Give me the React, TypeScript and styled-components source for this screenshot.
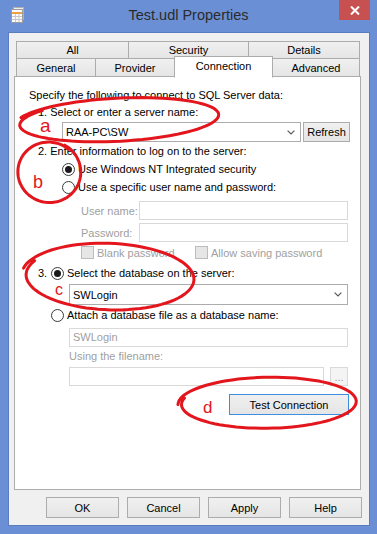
import React from "react";
import styled, { createGlobalStyle, css } from "styled-components";

const GlobalStyle = createGlobalStyle`
  html, body {
    margin: 0;
    padding: 0;
    background: #6b8fd4;
  }
  body {
    font-family: "Liberation Sans", Arial, sans-serif;
    font-size: 11px;
    color: #000;
  }
  * {
    box-sizing: border-box;
  }
`;

const Frame = styled.div`
  position: relative;
  width: 377px;
  height: 534px;
  background: #6b8fd4;
  display: flex;
  flex-direction: column;
  overflow: hidden;
`;

const TitleBar = styled.div`
  height: 32px;
  flex: none;
  display: grid;
  grid-template-columns: 1fr auto 1fr;
  align-items: start;
`;

const AppIcon = styled.svg`
  margin: 7px 0 0 10px;
`;

const Title = styled.div`
  font-size: 14.5px;
  line-height: 30px;
  color: #2b2b2b;
`;

const CloseButton = styled.div`
  justify-self: end;
  margin-right: 7px;
  width: 31px;
  height: 20px;
  background: #c75050;
  display: flex;
  align-items: center;
  justify-content: center;
`;

const Client = styled.div`
  flex: 1;
  margin: 0 7px 8px 8px;
  border: 1px solid #5a7cc0;
  background: #f0f0f0;
  padding: 8px 8px 7px 5px;
  display: flex;
  flex-direction: column;
`;

const TabStrip = styled.div`
  margin: 0 1px 0 2px;
  display: flex;
  flex-direction: column;
`;

const TabRow = styled.div<{ $h: number; $lower?: boolean }>`
  display: flex;
  align-items: flex-start;
  height: ${(p) => p.$h}px;
  margin-top: ${(p) => (p.$lower ? -1 : 0)}px;
`;

const Tab = styled.div<{ $w: number; $selected?: boolean }>`
  width: ${(p) => p.$w}px;
  height: 100%;
  margin-left: -1px;
  border: 1px solid #acacac;
  background: linear-gradient(#f0f0f0, #e5e5e5);
  display: flex;
  align-items: center;
  justify-content: center;
  &:first-child {
    margin-left: 0;
  }
  ${(p) =>
    p.$selected &&
    css`
      position: relative;
      z-index: 1;
      height: calc(100% + 3px);
      margin-top: -2px;
      background: #fff;
      border-bottom-color: #fff;
      padding-bottom: 2px;
    `}
`;

const Panel = styled.div`
  margin-top: -1px;
  height: 414px;
  border: 1px solid #adadad;
  background: #fff;
  padding: 11px 10px 0 14px;
  display: flex;
  flex-direction: column;
`;

const Line = styled.div<{ $indent?: number; $top?: number; $muted?: boolean }>`
  height: 15px;
  line-height: 15px;
  white-space: nowrap;
  margin-left: ${(p) => p.$indent ?? 0}px;
  margin-top: ${(p) => p.$top ?? 0}px;
  color: ${(p) => (p.$muted ? "#a0a0a0" : "#000")};
`;

const Row = styled.div<{ $indent?: number; $top?: number; $h?: number; $gap?: number }>`
  display: flex;
  align-items: center;
  height: ${(p) => p.$h ?? 16}px;
  margin-left: ${(p) => p.$indent ?? 0}px;
  margin-top: ${(p) => p.$top ?? 0}px;
  gap: ${(p) => p.$gap ?? 0}px;
  white-space: nowrap;
`;

const Radio = styled.span<{ $checked?: boolean }>`
  flex: none;
  width: 13px;
  height: 13px;
  margin-right: 3px;
  border-radius: 50%;
  border: 1px solid #3a3a3a;
  background: #fff;
  display: inline-flex;
  align-items: center;
  justify-content: center;
  &::after {
    content: "";
    width: 7px;
    height: 7px;
    border-radius: 50%;
    background: #1b1b1b;
    display: ${(p) => (p.$checked ? "block" : "none")};
  }
`;

const StepNumber = styled.span`
  width: 13px;
`;

const CheckItem = styled.div<{ $w?: number }>`
  display: flex;
  align-items: center;
  gap: 3px;
  width: ${(p) => (p.$w ? `${p.$w}px` : "auto")};
  color: #a0a0a0;
`;

const CheckBox = styled.span`
  flex: none;
  width: 13px;
  height: 13px;
  border: 1px solid #bcbcbc;
  background: #e6e6e6;
`;

const Combo = styled.div<{ $w: number; $h?: number; $indent?: number; $top?: number }>`
  width: ${(p) => p.$w}px;
  height: ${(p) => p.$h ?? 20}px;
  margin-left: ${(p) => p.$indent ?? 0}px;
  margin-top: ${(p) => p.$top ?? 0}px;
  flex: none;
  border: 1px solid #acacac;
  background: #fff;
  padding: 0 5px 0 3px;
  display: flex;
  align-items: center;
  justify-content: space-between;
`;

const FieldLabel = styled.span`
  width: 58px;
  color: #a0a0a0;
`;

const Field = styled.div<{ $w: number; $indent?: number; $top?: number }>`
  width: ${(p) => p.$w}px;
  height: 19px;
  margin-left: ${(p) => p.$indent ?? 0}px;
  margin-top: ${(p) => p.$top ?? 0}px;
  flex: none;
  border: 1px solid #d9d9d9;
  background: #fff;
  padding-left: 3px;
  line-height: 17px;
  color: #a0a0a0;
`;

const Button = styled.div<{ $w: number; $h?: number; $focused?: boolean; $disabled?: boolean }>`
  width: ${(p) => p.$w}px;
  height: ${(p) => p.$h ?? 21}px;
  flex: none;
  border: 1px solid ${(p) => (p.$focused ? "#3d8ee0" : p.$disabled ? "#d9d9d9" : "#acacac")};
  background: ${(p) => (p.$disabled ? "#f4f4f4" : "linear-gradient(#f0f0f0, #e5e5e5)")};
  color: ${(p) => (p.$disabled ? "#a0a0a0" : "#000")};
  display: flex;
  align-items: center;
  justify-content: center;
`;

const TestButton = styled(Button)`
  margin: 8px 0 0 200px;
`;

const ButtonBar = styled.div`
  margin: 7px -1px 0 0;
  display: flex;
  justify-content: flex-end;
  gap: 8px;
`;

const Annotations = styled.svg`
  position: absolute;
  left: 0;
  top: 0;
  pointer-events: none;
`;

const Chevron = () => (
  <svg width="8" height="5" viewBox="0 0 8 5">
    <path d="M0.6 0.6 L4 4 L7.4 0.6" fill="none" stroke="#5a5a5a" strokeWidth="1.2" />
  </svg>
);

// hand-drawn loop, a little more than a full turn
const loop = (cx: number, cy: number, rx: number, ry: number, rot: number, start: number, sweep: number, shrink: number) => {
  const n = 90;
  const r = (rot * Math.PI) / 180;
  let d = "";
  for (let i = 0; i <= n; i++) {
    const t = i / n;
    const a = ((start + sweep * t) * Math.PI) / 180;
    const k = 1 - shrink * t;
    const x = rx * k * Math.cos(a);
    const y = ry * k * Math.sin(a);
    const px = cx + x * Math.cos(r) - y * Math.sin(r);
    const py = cy + x * Math.sin(r) + y * Math.cos(r);
    d += `${i === 0 ? "M" : "L"}${px.toFixed(1)} ${py.toFixed(1)} `;
  }
  return d;
};

const App = () => {
  return (
    <Frame>
      <GlobalStyle />
      <TitleBar>
        <AppIcon width="15" height="16" viewBox="0 0 15 16">
          <rect x="3.5" y="0.5" width="10" height="12" fill="#eee" stroke="#b0b0b0" />
          <rect x="1.5" y="2.5" width="11" height="13" fill="#fafafa" stroke="#9c9c9c" />
          <rect x="2" y="5" width="10" height="2" fill="#f0a040" />
          <path d="M2 9.5h10M2 12.5h10M5.5 7v8M9 7v8" stroke="#c8c8c8" />
        </AppIcon>
        <Title>Test.udl Properties</Title>
        <CloseButton>
          <svg width="10" height="9" viewBox="0 0 10 9">
            <path d="M1 0.5 L9 8.5 M9 0.5 L1 8.5" stroke="#fff" strokeWidth="2" />
          </svg>
        </CloseButton>
      </TitleBar>
      <Client>
        <TabStrip>
          <TabRow $h={18}>
            <Tab $w={113}>All</Tab>
            <Tab $w={121}>Security</Tab>
            <Tab $w={112}>Details</Tab>
          </TabRow>
          <TabRow $h={19} $lower>
            <Tab $w={80}>General</Tab>
            <Tab $w={80}>Provider</Tab>
            <Tab $w={99} $selected>
              Connection
            </Tab>
            <Tab $w={88}>Advanced</Tab>
          </TabRow>
        </TabStrip>
        <Panel>
          <Line>Specify the following to connect to SQL Server data:</Line>
          <Line $indent={9} $top={2}>
            1. Select or enter a server name:
          </Line>
          <Row $indent={33} $top={2} $h={20} $gap={2}>
            <Combo $w={239}>
              <span>RAA-PC\SW</span>
              <Chevron />
            </Combo>
            <Button $w={47} $h={20}>
              Refresh
            </Button>
          </Row>
          <Line $indent={9} $top={2}>
            2. Enter information to log on to the server:
          </Line>
          <Row $indent={33} $top={2}>
            <Radio $checked />
            Use Windows NT Integrated security
          </Row>
          <Row $indent={33} $top={2}>
            <Radio />
            Use a specific user name and password:
          </Row>
          <Row $indent={52} $top={6} $h={19}>
            <FieldLabel>User name:</FieldLabel>
            <Field $w={209} />
          </Row>
          <Row $indent={52} $top={3} $h={19}>
            <FieldLabel>Password:</FieldLabel>
            <Field $w={209} />
          </Row>
          <Row $indent={52} $top={3} $h={15}>
            <CheckItem $w={114}>
              <CheckBox />
              Blank password
            </CheckItem>
            <CheckItem>
              <CheckBox />
              Allow saving password
            </CheckItem>
          </Row>
          <Row $indent={9} $top={5}>
            <StepNumber>3.</StepNumber>
            <Radio $checked />
            Select the database on the server:
          </Row>
          <Combo $w={279} $h={21} $indent={40} $top={3}>
            <span>SWLogin</span>
            <Chevron />
          </Combo>
          <Row $indent={22} $top={2}>
            <Radio />
            Attach a database file as a database name:
          </Row>
          <Field $w={279} $indent={40} $top={5}>
            SWLogin
          </Field>
          <Line $indent={40} $top={2} $muted>
            Using the filename:
          </Line>
          <Row $indent={40} $top={3} $h={19} $gap={6}>
            <Field $w={255} />
            <Button $w={18} $h={19} $disabled>
              ...
            </Button>
          </Row>
          <TestButton $w={120} $focused>
            Test Connection
          </TestButton>
        </Panel>
        <ButtonBar>
          <Button $w={73}>OK</Button>
          <Button $w={73}>Cancel</Button>
          <Button $w={73}>Apply</Button>
          <Button $w={73}>Help</Button>
        </ButtonBar>
      </Client>
      <Annotations width="377" height="534" viewBox="0 0 377 534">
        <g fill="none" stroke="#e3161d" strokeWidth="3" strokeLinecap="round">
          <path d={loop(118, 120, 103, 22, -3, 200, 380, 0.05)} />
          <path d={loop(49, 172, 32, 31, 10, 290, 370, 0.04)} />
          <path d={loop(109, 277, 87, 34, 2, 190, 375, 0.05)} />
          <path d={loop(268, 403, 90, 26, -1, 180, 375, 0.04)} />
        </g>
        <g fill="#e3161d" fontFamily="Liberation Sans, Arial, sans-serif">
          <text x="40" y="132" fontSize="19">a</text>
          <text x="33" y="188" fontSize="18">b</text>
          <text x="55" y="295" fontSize="16">c</text>
          <text x="203" y="413" fontSize="17">d</text>
        </g>
      </Annotations>
    </Frame>
  );
};

export default App;
